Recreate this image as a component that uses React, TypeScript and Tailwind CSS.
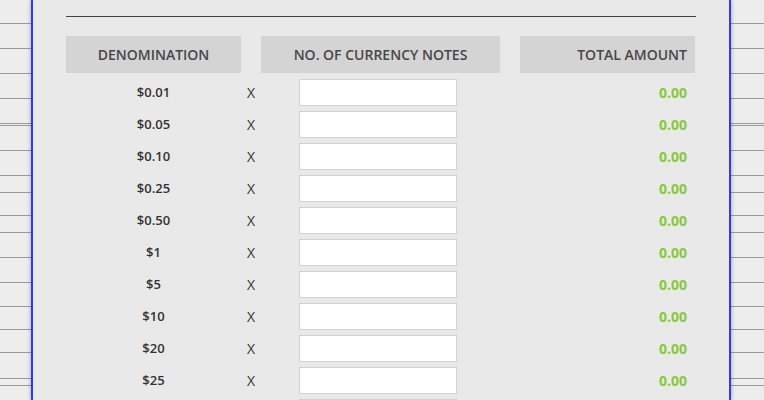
const denominations = [
  "$0.01",
  "$0.05",
  "$0.10",
  "$0.25",
  "$0.50",
  "$1",
  "$5",
  "$10",
  "$20",
  "$25",
  "$50",
];

// ruled lines of the page behind the dialog
const stripRows = [
  "h-[24px]",
  "h-[25px]",
  "h-[25px]",
  "h-[25px]",
  "h-[25px]",
  "h-[2px]",
  "h-[25px]",
  "h-[25px]",
  "h-[17px]",
  "h-[23px]",
  "h-[17px]",
  "h-[25px]",
  "h-[25px]",
  "h-[24px]",
  "h-[23px]",
  "h-[23px]",
  "h-[26px]",
  "h-[7px]",
];

function SideStrip({ className }: { className: string }) {
  return (
    <div className={`flex flex-col ${className}`}>
      {stripRows.map((h, i) => (
        <div key={i} className={`${h} shrink-0 border-b border-[#9a9a9a]`} />
      ))}
    </div>
  );
}

function CurrencyRow({ label }: { label: string }) {
  return (
    <div className="grid h-8 shrink-0 grid-cols-[175px_20px_239px_20px_175px] items-center">
      <div className="pt-[2px] text-center text-[13px] font-semibold text-[#333]">
        {label}
      </div>
      <div className="pt-[1px] text-center text-[14px] text-[#333]">X</div>
      <div className="pl-[38px]">
        <input
          type="text"
          className="block h-[27px] w-[158px] border border-[#d3d3d3] bg-white px-2 text-[13px] outline-none"
        />
      </div>
      <div />
      <div className="pr-2 text-right text-[14px] font-bold text-[#8cc63e]">
        0.00
      </div>
    </div>
  );
}

export default function App() {
  return (
    <div className="flex h-[400px] w-[764px] overflow-hidden bg-[#ededed] font-['Open_Sans',sans-serif]">
      <SideStrip className="w-[31px] shrink-0" />

      <div className="relative z-10 flex w-[700px] shrink-0 flex-col border-x-2 border-[#3535ff] bg-[#e9e9e9] px-[33px] pt-4 shadow-[0_0_4px_rgba(0,0,0,0.35)]">
        <div className="border-t border-[#444]" />

        <div className="mt-[19px] grid h-[37px] shrink-0 grid-cols-[175px_20px_239px_20px_175px] text-[14px] font-semibold text-[#474747]">
          <div className="flex items-center justify-center bg-[#d4d4d4]">
            DENOMINATION
          </div>
          <div />
          <div className="flex items-center justify-center bg-[#d4d4d4]">
            NO. OF CURRENCY NOTES
          </div>
          <div />
          <div className="flex items-center justify-end bg-[#d4d4d4] pr-2">
            TOTAL AMOUNT
          </div>
        </div>

        <div className="mt-[3px] flex flex-col">
          {denominations.map((d) => (
            <CurrencyRow key={d} label={d} />
          ))}
        </div>
      </div>

      <SideStrip className="flex-1" />
    </div>
  );
}
